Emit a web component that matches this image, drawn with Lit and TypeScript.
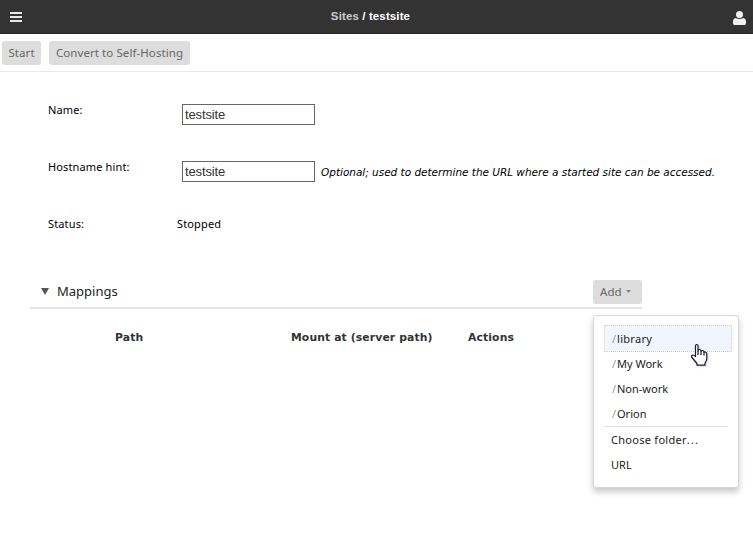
import { LitElement, html, css } from "lit";
import { customElement, property } from "lit/decorators.js";

@customElement("site-field")
class SiteField extends LitElement {
  @property() label = "";
  static styles = css`
    :host { display: flex; height: 57px; align-items: flex-start; }
    .label { width: 129px; line-height: 14px; flex: none; margin-top: -1px; letter-spacing: .14px; }
    .value { display: flex; align-items: flex-start; line-height: 14px; white-space: nowrap; }
  `;
  render() {
    return html`<span class="label">${this.label}</span><div class="value"><slot></slot></div>`;
  }
}

@customElement("app-root")
class AppRoot extends LitElement {
  static styles = css`
    * { box-sizing: border-box; }
    :host {
      display: block; position: relative; width: 753px; height: 534px; overflow: hidden;
      background: #fff; color: #000;
      font-family: "Noto Sans", sans-serif; font-size: 11px; line-height: 14px;
    }
    header {
      height: 34px; background: #333; border-bottom: 1px solid #2b282b;
      display: grid; grid-template-columns: 1fr auto 1fr; align-items: center; padding: 0 7px 0 10px;
    }
    header svg { display: block; }
    header .user { justify-self: end; margin-top: 2px; }
    .crumb { font: bold 11.5px/14px "Liberation Sans", Arial, sans-serif; color: #fff; margin: 0 15px 1px 0; letter-spacing: .12px; }
    .crumb .parent { color: #ccc; }
    .toolbar { height: 38px; border-bottom: 1px solid #e8e8e8; padding: 7px 2px; display: flex; gap: 8px; }
    button {
      height: 24px; border: 0; border-radius: 3px; background: #ddd; color: #666; padding: 0 0 1px;
      font: 11.5px/14px "Noto Sans", sans-serif; letter-spacing: .08px; white-space: nowrap;
    }
    .start { width: 39px; }
    .convert { width: 141px; }
    .form { padding: 32px 0 0 48px; height: 208px; }
    input {
      width: 133px; height: 21px; margin: 0 0 0 5px; border: 1px solid #666; border-radius: 0; padding: 0 2px;
      background: #fff; color: #333; font: 13px/17px "Liberation Sans", Arial, sans-serif; letter-spacing: -.12px; outline: 0;
    }
    .hint { margin: 4px 0 0 6px; font-family: "DejaVu Sans", sans-serif; font-size: 10.5px; font-style: italic; letter-spacing: -.02px; }
    .status { margin-top: -1px; letter-spacing: .14px; }
    .mappings { width: 612px; margin-left: 30px; }
    .heading { height: 29px; border-bottom: 2px solid #e3e3e3; display: flex; align-items: flex-start; padding-left: 11px; }
    .twisty { margin-top: 8px; display: block; }
    h2 { margin: 2px 0 0 8px; font-size: 13px; line-height: 18px; font-weight: 400; color: #222; flex: 1; }
    .add { width: 49px; display: flex; align-items: center; padding-left: 7px; gap: 4px; }
    .columns { display: grid; grid-template-columns: 176px 177px 1fr; padding: 21px 0 0 85px; font-family: "DejaVu Sans", sans-serif; font-size: 10.8px; font-weight: 700; line-height: 16px; letter-spacing: .12px; color: #333; white-space: nowrap; }
    .menu {
      position: absolute; left: 593px; top: 315px; width: 146px; height: 173px; background: #fff;
      border: 1px solid #d8d8d8; border-radius: 3px; box-shadow: 0 4px 6px rgba(0,0,0,.22);
      padding: 9px 6px 0 10px; color: #222;
    }
    .item { height: 25px; line-height: 25px; padding-left: 8px; white-space: nowrap; }
    .item.active { height: 27px; margin-bottom: -1px; background: #f1f5ff; border: 1px dotted #ccc; border-left-color: #f5cf8d; padding-left: 7px; letter-spacing: .3px; }
    .slash { color: #999; display: inline-block; width: 5px; }
    .rule { height: 1px; background: #ddd; margin: 0 4px 0 0; }
    .plain { padding-left: 7px; }
    .choose { letter-spacing: .28px; }
    .dots { letter-spacing: 1.2px; }
    .pointer { position: absolute; left: 690px; top: 343px; filter: drop-shadow(1px 1px 1px rgba(0,0,0,.15)); }
  `;
  folders = ["library", "My Work", "Non-work", "Orion"];
  render() {
    return html`
      <header>
        <svg width="12" height="10" fill="#e8e8e8"><path d="M0 0h12v2H0zM0 4h12v2H0zM0 8h12v2H0z"/></svg>
        <div class="crumb"><span class="parent">Sites</span> / testsite</div>
        <svg class="user" width="13" height="14" viewBox="0 0 13 14" fill="#f0f0f0"><circle cx="6.500" cy="3.500" r="3.500"/><path d="M2.700 7Q6.500 9 10.300 7Q13 7.500 13 10V12Q13 14 11.500 14H1.500Q0 14 0 12V10Q0 7.500 2.700 7z"/></svg>
      </header>
      <div class="toolbar"><button class="start">Start</button><button class="convert">Convert to Self-Hosting</button></div>
      <div class="form">
        <site-field label="Name:"><input .value=${"testsite"}></site-field>
        <site-field label="Hostname hint:"><input .value=${"testsite"}><span class="hint">Optional; used to determine the URL where a started site can be accessed.</span></site-field>
        <site-field label="Status:"><span class="status">Stopped</span></site-field>
      </div>
      <section class="mappings">
        <div class="heading">
          <svg class="twisty" width="8" height="7" fill="#555"><path d="M0 0h8L4 7z"/></svg>
          <h2>Mappings</h2>
          <button class="add">Add <svg width="5" height="3" fill="#888"><path d="M0 0h5L2.500 3z"/></svg></button>
        </div>
        <div class="columns"><span>Path</span><span>Mount at (server path)</span><span>Actions</span></div>
      </section>
      <div class="menu">
        ${this.folders.map((f, i) => html`<div class="item ${i === 0 ? "active" : ""}"><span class="slash">/</span>${f}</div>`)}
        <div class="rule"></div>
        <div class="item plain choose">Choose folder<span class="dots">...</span></div>
        <div class="item plain">URL</div>
      </div>
      <svg class="pointer" width="19" height="24" viewBox="0 0 19 24" fill="#fff" stroke="#1a1a2a" stroke-width="1.200" stroke-linejoin="round">
        <path d="M5.500 13.500V3Q5.500 1.500 6.750 1.500T8 3V8Q8 6.500 9.500 6.500T11 8V8.500Q11 7.500 12.500 7.500T14 9V9.500Q14 8.800 15.200 9Q16.800 9.200 16.800 11V16Q16.500 18 15 20V22.200H7V20.500L2 14.500Q1 12.500 2.500 12Q4 12 5.500 13.500z"/>
        <path d="M8 8v4M11 8.500v3.500M14 9.500v3" fill="none"/>
      </svg>`;
  }
}
